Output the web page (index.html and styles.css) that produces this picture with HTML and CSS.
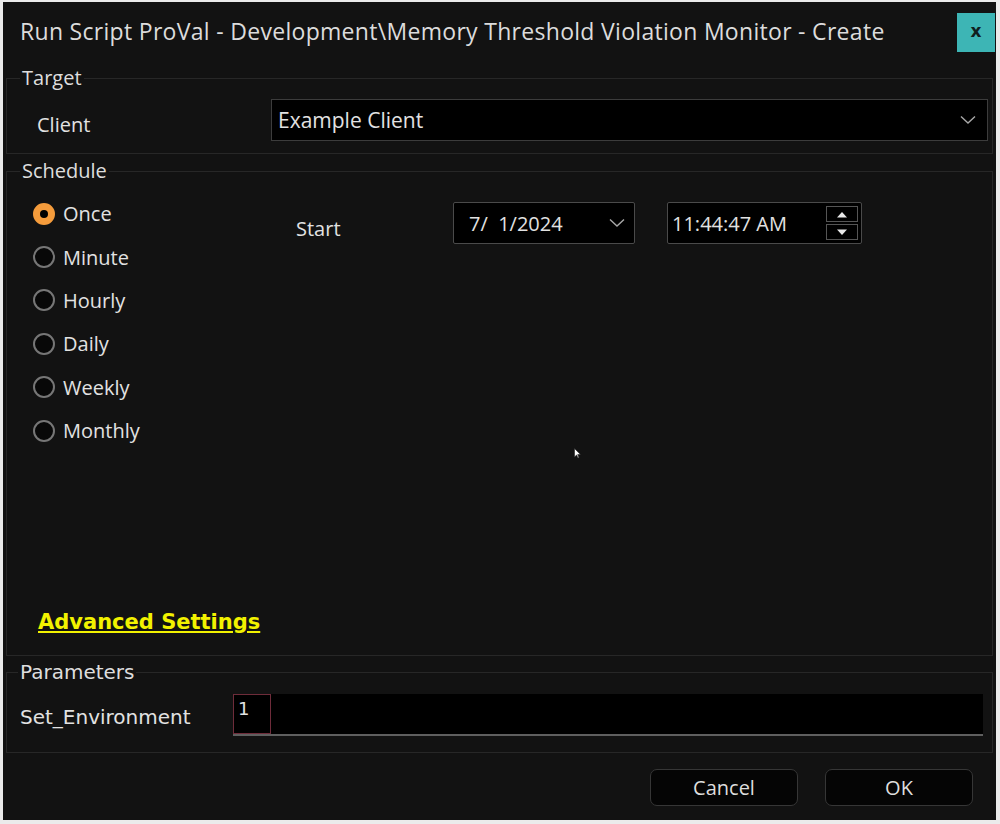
FILE: index.html
```html
<!DOCTYPE html>
<html>

<head>
    <title>Run Script - Create</title>
    <meta charset="utf-8">
    <meta name="viewport" content="width=device-width, initial-scale=1">
    <link rel="stylesheet" href="styles.css">
</head>

<body>
    <div class="window">
        <div class="titlebar">
            <span class="title">Run Script ProVal - Development\Memory Threshold Violation Monitor - Create</span>
            <button class="close">x</button>
        </div>

        <fieldset class="group group-target">
            <legend>Target</legend>
            <div class="client-row">
                <span class="client-label">Client</span>
                <div class="combo">
                    <span>Example Client</span>
                    <svg class="chevron" width="16" height="10" viewBox="0 0 16 10">
                        <polyline points="1,1.5 8,8 15,1.5" fill="none" stroke="#a8a8a8" stroke-width="1.4" />
                    </svg>
                </div>
            </div>
        </fieldset>

        <fieldset class="group group-schedule">
            <legend>Schedule</legend>
            <div class="schedule-body">
                <div class="schedule-top">
                    <ul class="radios">
                        <li class="radio-item checked"><span class="radio"></span>Once</li>
                        <li class="radio-item"><span class="radio"></span>Minute</li>
                        <li class="radio-item"><span class="radio"></span>Hourly</li>
                        <li class="radio-item"><span class="radio"></span>Daily</li>
                        <li class="radio-item"><span class="radio"></span>Weekly</li>
                        <li class="radio-item"><span class="radio"></span>Monthly</li>
                    </ul>
                    <div class="start-row">
                        <span class="start-label">Start</span>
                        <div class="date-picker">
                            <span class="date-text">7/  1/2024</span>
                            <svg class="chevron" width="16" height="10" viewBox="0 0 16 10">
                                <polyline points="1,1.5 8,8 15,1.5" fill="none" stroke="#a8a8a8" stroke-width="1.4" />
                            </svg>
                        </div>
                        <div class="time-picker">
                            <span>11:44:47 AM</span>
                            <div class="spinner">
                                <span class="spin-btn">
                                    <svg width="12" height="7" viewBox="0 0 12 7"><polygon points="1,6.5 6,1 11,6.5" fill="#e8e8e8" /></svg>
                                </span>
                                <span class="spin-btn">
                                    <svg width="12" height="7" viewBox="0 0 12 7"><polygon points="1,0.5 6,6 11,0.5" fill="#e8e8e8" /></svg>
                                </span>
                            </div>
                        </div>
                    </div>
                </div>
                <a class="advanced" href="#">Advanced Settings</a>
            </div>
        </fieldset>

        <fieldset class="group group-params">
            <legend>Parameters</legend>
            <div class="param-row">
                <span class="param-label">Set_Environment</span>
                <div class="param-input">
                    <span class="param-value">1</span>
                </div>
            </div>
        </fieldset>

        <div class="footer">
            <button class="btn">Cancel</button>
            <button class="btn">OK</button>
        </div>

        <svg class="cursor" width="7" height="11" viewBox="0 0 7 11">
            <polygon points="0.5,0.5 0.5,9 2.6,7 4,10 5,9.5 3.7,6.6 6.5,6.6" fill="#ffffff" stroke="#222" stroke-width="0.6" />
        </svg>
    </div>
</body>

</html>
```

FILE: styles.css
```css
body,
html {
    margin: 0;
    padding: 0;
    background-color: #ebebeb;
    font-family: 'Open Sans', sans-serif;
    color: #e2e2e2;
}

.window {
    position: relative;
    margin: 2px 0 0 3px;
    width: 993px;
    height: 818px;
    background-color: #121212;
    display: flex;
    flex-direction: column;
    box-sizing: border-box;
}

/* title bar */
.titlebar {
    height: 58px;
    display: flex;
    align-items: flex-start;
    padding: 11px 1px 0 17px;
    box-sizing: border-box;
}

.title {
    font-size: 23px;
    letter-spacing: 0.3px;
    line-height: 36px;
    color: #dcdcdc;
    white-space: nowrap;
}

.close {
    margin-left: auto;
    width: 38px;
    height: 39px;
    border: none;
    padding: 0 0 3px;
    background-color: #3db5b5;
    color: #102020;
    font-family: 'DejaVu Sans', sans-serif;
    font-weight: bold;
    font-size: 17px;
}

/* group boxes */
.group {
    margin: 0 3px;
    padding: 0;
    border: 1px solid #272727;
    box-sizing: border-box;
    min-width: 0;
}

.group legend {
    margin-left: 13px;
    padding: 0 2px;
    font-size: 20px;
    line-height: 24px;
    color: #dedede;
}

.group-target {
    margin-top: 6px;
    height: 88px;
}

.group-schedule {
    margin-top: 5px;
    height: 497px;
}

.group-params {
    margin-top: 4px;
    height: 93px;
}

.group-params legend {
    margin-left: 11px;
    font-family: 'DejaVu Sans', sans-serif;
    font-size: 20px;
}

/* target */
.client-row {
    display: flex;
    align-items: center;
    margin-top: 9px;
    padding: 0 4px 0 30px;
}

.client-label {
    width: 234px;
    font-size: 20px;
    margin-top: 9px;
}

.combo {
    flex: 1;
    height: 42px;
    display: flex;
    align-items: center;
    justify-content: space-between;
    background-color: #000;
    border: 1px solid #3c3c3c;
    box-sizing: border-box;
    padding: 0 11px 0 6px;
    font-size: 21px;
}

/* schedule */
.schedule-body {
    height: 471px;
    display: flex;
    flex-direction: column;
}

.schedule-top {
    display: flex;
    align-items: flex-start;
}

.radios {
    list-style: none;
    margin: 0;
    padding: 9px 0 0 26px;
    width: 263px;
}

.radio-item {
    height: 43.4px;
    display: flex;
    align-items: center;
    gap: 8px;
    font-size: 20px;
}

.radio {
    width: 22px;
    height: 22px;
    border: 2px solid #767676;
    border-radius: 50%;
    background-color: #080808;
    box-sizing: border-box;
    display: flex;
    align-items: center;
    justify-content: center;
}

.radio-item.checked .radio {
    background-color: #f59c3c;
    border-color: #f59c3c;
}

.radio-item.checked .radio::after {
    content: "";
    width: 8px;
    height: 8px;
    border-radius: 50%;
    background-color: #000;
}

.start-row {
    display: flex;
    align-items: flex-start;
    margin-top: 19px;
}

.start-label {
    width: 157px;
    margin-top: 13px;
    font-size: 20px;
}

.date-picker,
.time-picker {
    height: 42px;
    display: flex;
    align-items: center;
    background-color: #000;
    border: 1px solid #4a4a4a;
    border-radius: 2px;
    box-sizing: border-box;
    font-size: 20px;
}

.date-picker {
    width: 182px;
    justify-content: space-between;
    padding: 0 9px 0 15px;
}

.date-text {
    white-space: pre;
}

.time-picker {
    width: 195px;
    margin-left: 32px;
    justify-content: space-between;
    padding: 0 3px 0 4px;
}

.spinner {
    display: flex;
    flex-direction: column;
    gap: 2px;
}

.spin-btn {
    width: 32px;
    height: 16px;
    border: 1px solid #555;
    box-sizing: border-box;
    display: flex;
    align-items: center;
    justify-content: center;
}

.advanced {
    margin: auto 0 19px 31px;
    align-self: flex-start;
    font-family: 'DejaVu Sans', sans-serif;
    font-weight: bold;
    font-size: 21px;
    line-height: 26px;
    color: #f2f200;
    text-decoration: underline;
    text-decoration-thickness: 2px;
    text-underline-offset: 2px;
}

/* parameters */
.param-row {
    display: flex;
    align-items: center;
    margin-top: 10px;
    padding: 0 9px 0 13px;
}

.param-label {
    width: 213px;
    margin-top: 4px;
    font-family: 'DejaVu Sans', sans-serif;
    font-size: 20px;
}

.param-input {
    flex: 1;
    height: 40px;
    display: flex;
    background-color: #000;
    border-bottom: 2px solid #5f5f5f;
}

.param-value {
    width: 38px;
    height: 40px;
    border: 1px solid #6e2c3a;
    box-sizing: border-box;
    padding: 2px 0 0 4px;
    font-family: 'DejaVu Sans', sans-serif;
    font-size: 18px;
    line-height: 24px;
}

/* footer */
.footer {
    display: flex;
    justify-content: flex-end;
    gap: 27px;
    padding: 16px 23px 0 0;
}

.btn {
    width: 148px;
    height: 37px;
    border: 1px solid #363636;
    border-radius: 7px;
    background-color: #050505;
    color: #dedede;
    font-family: 'Open Sans', sans-serif;
    font-size: 20px;
    padding: 0;
}

.cursor {
    position: absolute;
    left: 571px;
    top: 446px;
}
```
